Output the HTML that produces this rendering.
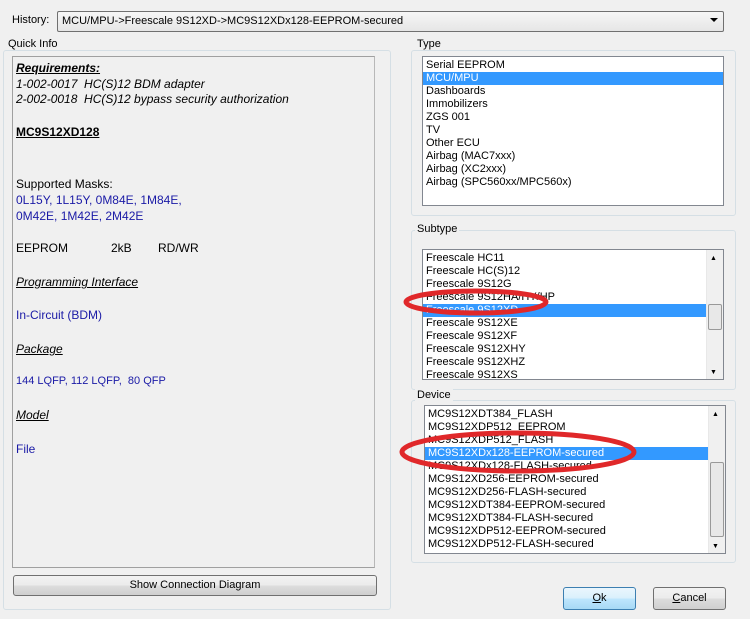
<!DOCTYPE html>
<html><head><style>
*{margin:0;padding:0;box-sizing:border-box}
body{width:750px;height:619px;background:#f0f0f0;font-family:"Liberation Sans",sans-serif;font-size:11px;color:#000;position:relative;overflow:hidden}
.a{position:absolute;white-space:nowrap}
.grp{position:absolute;border:1px solid #d5dfe5;border-radius:3px}
.lbl{position:absolute;background:#f0f0f0;padding:0 2px;font-size:11px}
.list{position:absolute;background:#fff;border:1px solid #828790}
.it{height:13px;line-height:13px;padding-left:3px;font-size:11px}
.sel{background:#3399ff;color:#fff}
.sb{position:absolute;right:0;top:0;bottom:0;width:17px;background:#f0f0f0;border-left:1px solid #e8e8e8}
.btn{position:absolute;border:1px solid #707070;border-radius:3px;background:linear-gradient(#f2f2f2,#ebebeb 50%,#dddddd 51%,#cfcfcf);text-align:center;font-size:11px}
.q{position:absolute;left:16px;font-size:12px;white-space:nowrap}
.b{color:#1a1aa6}
</style></head><body>
<div class="a" style="left:12px;top:14px">History:</div>
<div class="a" style="left:57px;top:11px;width:667px;height:21px;border:1px solid #707070;border-radius:2px;background:linear-gradient(#f6f6f6,#e6e6e6);padding:3px 0 0 4px">MCU/MPU-&gt;Freescale 9S12XD-&gt;MC9S12XDx128-EEPROM-secured
<span style="position:absolute;right:5px;top:6px;width:0;height:0;border-left:4px solid transparent;border-right:4px solid transparent;border-top:4px solid #000"></span></div>

<div class="grp" style="left:3px;top:50px;width:388px;height:560px"></div>
<div class="lbl" style="left:6px;top:38px">Quick Info</div>
<div class="a" style="left:12px;top:56px;width:363px;height:512px;border:1px solid #a0a0a0;border-right-color:#b8b8b8;background:#f0f0f0"></div>
<div class="q" style="top:61px;font-weight:bold;font-style:italic;text-decoration:underline">Requirements:</div>
<div class="q" style="top:77px;font-style:italic">1-002-0017&nbsp; HC(S)12 BDM adapter</div>
<div class="q" style="top:92px;font-style:italic">2-002-0018&nbsp; HC(S)12 bypass security authorization</div>
<div class="q" style="top:125px;font-weight:bold;text-decoration:underline">MC9S12XD128</div>
<div class="q" style="top:177px">Supported Masks:</div>
<div class="q b" style="top:193px">0L15Y, 1L15Y, 0M84E, 1M84E,</div>
<div class="q b" style="top:209px">0M42E, 1M42E, 2M42E</div>
<div class="q" style="top:241px">EEPROM<span style="position:absolute;left:95px">2kB</span><span style="position:absolute;left:142px">RD/WR</span></div>
<div class="q" style="top:275px;font-style:italic;text-decoration:underline">Programming Interface</div>
<div class="q b" style="top:308px">In-Circuit (BDM)</div>
<div class="q" style="top:342px;font-style:italic;text-decoration:underline">Package</div>
<div class="q b" style="top:375px;font-size:11px">144 LQFP, 112 LQFP,&nbsp; 80 QFP</div>
<div class="q" style="top:408px;font-style:italic;text-decoration:underline">Model</div>
<div class="q b" style="top:442px">File</div>
<div class="btn" style="left:13px;top:575px;width:364px;height:21px;line-height:19px">Show Connection Diagram</div>

<div class="grp" style="left:411px;top:50px;width:325px;height:166px"></div>
<div class="lbl" style="left:415px;top:38px">Type</div>
<div class="list" style="left:422px;top:56px;width:302px;height:150px;padding-top:2px">
<div class="it">Serial EEPROM</div><div class="it sel">MCU/MPU</div><div class="it">Dashboards</div><div class="it">Immobilizers</div><div class="it">ZGS 001</div><div class="it">TV</div><div class="it">Other ECU</div><div class="it">Airbag (MAC7xxx)</div><div class="it">Airbag (XC2xxx)</div><div class="it">Airbag (SPC560xx/MPC560x)</div></div>

<div class="grp" style="left:411px;top:230px;width:325px;height:160px"></div>
<div class="lbl" style="left:415px;top:223px">Subtype</div>
<div class="list" style="left:422px;top:249px;width:302px;height:131px;padding-top:2px">
<div class="it">Freescale HC11</div><div class="it">Freescale HC(S)12</div><div class="it">Freescale 9S12G</div><div class="it">Freescale 9S12HA/HY/HP</div><div class="it sel" style="margin-right:17px">Freescale 9S12XD</div><div class="it">Freescale 9S12XE</div><div class="it">Freescale 9S12XF</div><div class="it">Freescale 9S12XHY</div><div class="it">Freescale 9S12XHZ</div><div class="it">Freescale 9S12XS</div>
<div class="sb"><div class="a" style="left:3px;top:5px;font-size:7px">▲</div><div class="a" style="left:1px;top:54px;width:14px;height:26px;border:1px solid #999;border-radius:2px;background:#e8e8e8"></div><div class="a" style="left:3px;bottom:3px;font-size:7px">▼</div></div></div>

<div class="grp" style="left:411px;top:400px;width:325px;height:163px"></div>
<div class="lbl" style="left:415px;top:389px">Device</div>
<div class="list" style="left:424px;top:405px;width:302px;height:149px;padding-top:2px">
<div class="it">MC9S12XDT384_FLASH</div><div class="it">MC9S12XDP512_EEPROM</div><div class="it">MC9S12XDP512_FLASH</div><div class="it sel" style="margin-right:17px">MC9S12XDx128-EEPROM-secured</div><div class="it">MC9S12XDx128-FLASH-secured</div><div class="it">MC9S12XD256-EEPROM-secured</div><div class="it">MC9S12XD256-FLASH-secured</div><div class="it">MC9S12XDT384-EEPROM-secured</div><div class="it">MC9S12XDT384-FLASH-secured</div><div class="it">MC9S12XDP512-EEPROM-secured</div><div class="it">MC9S12XDP512-FLASH-secured</div>
<div class="sb"><div class="a" style="left:3px;top:5px;font-size:7px">▲</div><div class="a" style="left:1px;top:56px;width:14px;height:75px;border:1px solid #999;border-radius:2px;background:#e8e8e8"></div><div class="a" style="left:3px;bottom:3px;font-size:7px">▼</div></div></div>

<svg class="a" style="left:0;top:0" width="750" height="619">
<ellipse cx="476" cy="302" rx="70" ry="11" fill="none" stroke="#e0282a" stroke-width="5"/>
<ellipse cx="518" cy="452" rx="116" ry="19" fill="none" stroke="#e0282a" stroke-width="5"/>
</svg>

<div class="btn" style="left:563px;top:587px;width:73px;height:23px;line-height:21px;border-color:#3c7fb1;background:linear-gradient(#eaf6fd,#d9f0fc 50%,#bee6fd 51%,#a7d9f5)"><u>O</u>k</div>
<div class="btn" style="left:653px;top:587px;width:73px;height:23px;line-height:21px"><u>C</u>ancel</div>
</body></html>
